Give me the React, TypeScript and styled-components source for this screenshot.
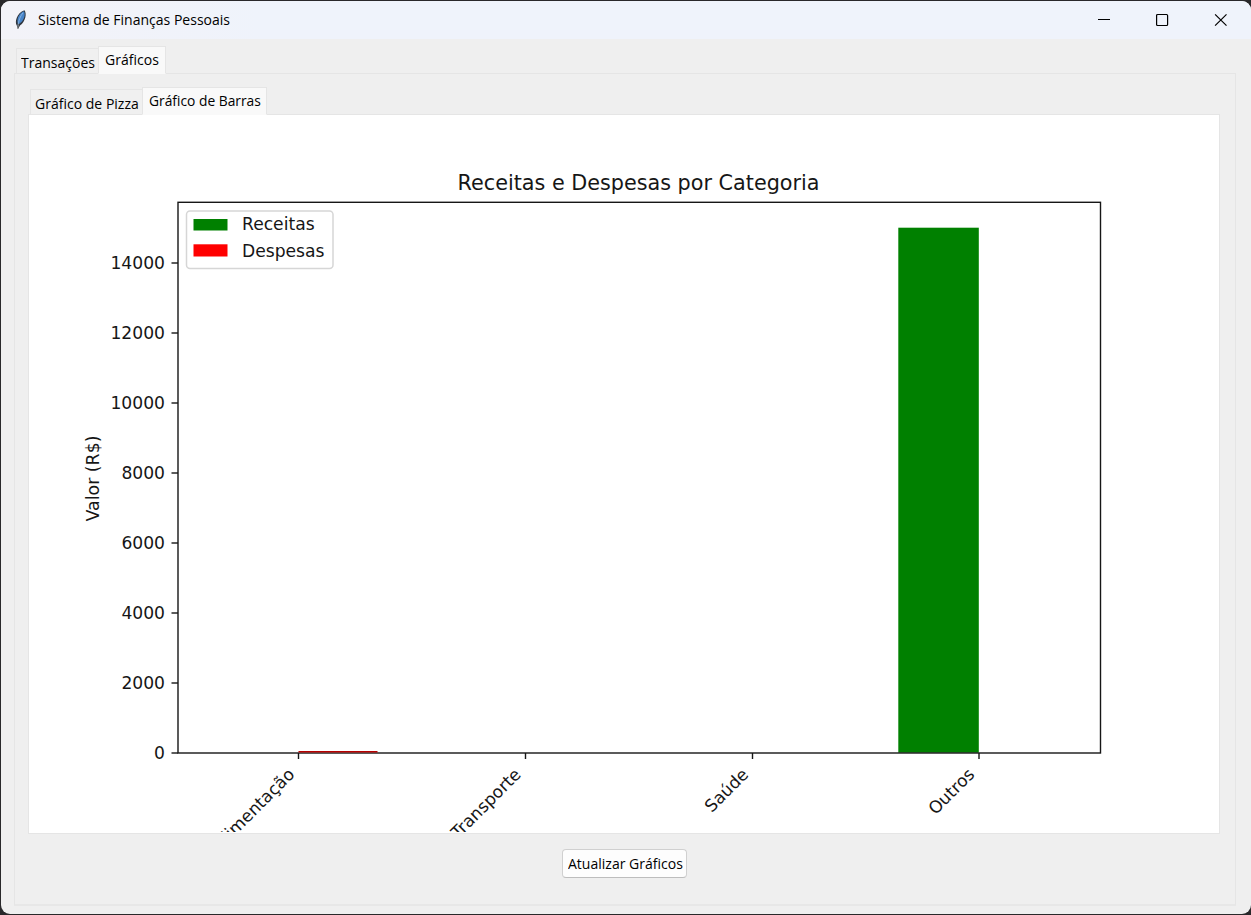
import React from "react";
import styled, { createGlobalStyle } from "styled-components";

const GlobalStyle = createGlobalStyle`
  * { box-sizing: border-box; }
  html, body { margin: 0; background: #29282a; }
  body { width: 1251px; height: 915px; overflow: hidden; }
`;

const Desktop = styled.div`
  width: 1251px;
  height: 915px;
  padding: 1px 0 1px 1px;
  background: #29282a;
  font-family: "Open Sans", "Noto Sans", sans-serif;
  font-size: 15px;
  color: #000;
`;

const Window = styled.main`
  display: flex;
  flex-direction: column;
  height: 913px;
  border-radius: 9px;
  overflow: hidden;
  background: #efefef;
`;

const TitleBar = styled.header`
  display: flex;
  align-items: center;
  height: 38px;
  flex: none;
  padding: 0 1px 0 13px;
  background: linear-gradient(90deg, #f3f3f8 0, #eff3fb 260px);
`;

const Label = styled.span<{ $scale?: number }>`
  display: block;
  width: max-content;
  line-height: 20px;
  white-space: nowrap;
  transform: scaleX(${(p) => p.$scale ?? 0.935});
  transform-origin: 0 50%;
`;

const AppTitle = styled.div`
  flex: 1;
  margin: -2px 0 0 10px;
`;

const Controls = styled.div`
  display: flex;
  height: 100%;
`;

const Control = styled.button`
  display: grid;
  place-items: center;
  width: 58px;
  padding: 0;
  border: 0;
  background: transparent;
`;

const OuterNotebook = styled.section`
  display: flex;
  flex-direction: column;
  width: 1222px;
  margin: 7px 0 0 13px;
  flex: none;
`;

const InnerNotebook = styled.section`
  display: flex;
  flex-direction: column;
  width: 1192px;
  margin: 13px 0 0 13px;
`;

const TabList = styled.nav`
  display: flex;
  align-items: flex-end;
  height: 28px;
  padding-left: 2px;
  margin-bottom: -1px;
`;

const Tab = styled.button<{ $width: number; $active?: boolean }>`
  position: relative;
  z-index: ${(p) => (p.$active ? 1 : 0)};
  width: ${(p) => p.$width}px;
  height: ${(p) => (p.$active ? 28 : 26)}px;
  padding: ${(p) => (p.$active ? "2px 0 0 6px" : "3px 0 0 4px")};
  border: 1px solid #e5e5e5;
  border-bottom-color: ${(p) => (p.$active ? "#f9f9f9" : "#e5e5e5")};
  border-right-width: ${(p) => (p.$active ? 1 : 0)}px;
  background: ${(p) => (p.$active ? "#f9f9f9" : "#f0f0f0")};
  display: flex;
  align-items: flex-start;
  font: inherit;
  color: inherit;
`;

const OuterPane = styled.div`
  height: 833px;
  border: 1px solid #e5e5e5;
  border-bottom: 2px solid #e7e7e7;
  background: #efefef;
`;

const ChartPane = styled.div`
  height: 720px;
  border: 1px solid #e5e5e5;
  background: #fff;
  overflow: hidden;
`;

const Chart = styled.svg`
  display: block;
  font-family: "DejaVu Sans", sans-serif;
  font-size: 17.15px;
  fill: #161616;
`;

const RefreshButton = styled.button`
  display: flex;
  align-items: flex-start;
  width: 125px;
  height: 29px;
  margin: 15px 0 0 547px;
  padding: 3px 0 0 4.5px;
  border: 1px solid #d0d0d0;
  border-bottom-color: #bdbdbd;
  border-radius: 4px;
  background: #fdfdfd;
  font: inherit;
  color: inherit;
`;

const values = [0, 2000, 4000, 6000, 8000, 10000, 12000, 14000];
const categories = [
  { name: "Alimentação", x: 298.5, end: 295.5 },
  { name: "Transporte", x: 525.5, end: 522 },
  { name: "Saúde", x: 752.5, end: 749.5 },
  { name: "Outros", x: 979, end: 975.5 },
];

const Feather = () => (
  <svg width="14" height="22" viewBox="0 0 14 22">
    <path d="M2.800 16.500C.5 13 2.500 4 10.500 1.200C13 4.500 11.500 12.500 6 16.500L4 20Z" fill="#30363e" />
    <path d="M3.800 14.500C2.500 9 5.500 4 10 2.300C12 6 9.500 12.500 5 15Z" fill="#4683c8" />
    <path d="M4 17.500C4.200 12.500 6.500 6.500 9 4" fill="none" stroke="#a4c5e8" strokeWidth=".7" />
    <path d="M4.200 15.500L3.800 19.800" stroke="#777" strokeWidth="1" />
  </svg>
);

const BarChart = () => (
  <Chart width="1190" height="716.5" viewBox="29 115 1190 716.5">
    <text x="457.500" y="190" fontSize="20.83" textLength="362" lengthAdjust="spacingAndGlyphs">
      Receitas e Despesas por Categoria
    </text>
    <rect x="898.300" y="227.700" width="80.500" height="525" fill="#008000" />
    <rect x="178" y="202.300" width="922.500" height="550.700" fill="none" stroke="#161616" strokeWidth="1.400" />
    <rect x="298.500" y="751" width="79" height="1.500" fill="#b80000" />
    {values.map((v) => {
      const y = 753 - (v / 2000) * 70;
      return (
        <g key={v}>
          <path d={`M171.500 ${y}H178`} stroke="#161616" strokeWidth="1.400" />
          <text x="165" y={y + 6} textAnchor="end">{v}</text>
        </g>
      );
    })}
    {categories.map((c) => (
      <g key={c.name}>
        <path d={`M${c.x} 753V759`} stroke="#161616" strokeWidth="1.400" />
        <text transform={`translate(${c.end} 775.500) rotate(-45)`} textAnchor="end" fontSize="17">{c.name}</text>
      </g>
    ))}
    <text transform="translate(98.500 478.500) rotate(-90)" textAnchor="middle" fontSize="17.36">Valor (R$)</text>
    <rect x="186.500" y="211" width="146.500" height="57.500" rx="3.500" fill="#fff" stroke="#d6d6d6" strokeWidth="1.500" />
    <rect x="193.500" y="219" width="34" height="11.500" fill="#008000" />
    <rect x="193.500" y="244.300" width="34" height="12.200" fill="#f00" />
    <text x="242" y="230">Receitas</text>
    <text x="242" y="256.500">Despesas</text>
  </Chart>
);

export default function App() {
  return (
    <>
      <GlobalStyle />
      <Desktop>
        <Window>
          <TitleBar>
            <Feather />
            <AppTitle><Label>Sistema de Finanças Pessoais</Label></AppTitle>
            <Controls>
              <Control aria-label="Minimizar">
                <svg width="14" height="14"><path d="M0 6.500H12" stroke="#000" /></svg>
              </Control>
              <Control aria-label="Maximizar">
                <svg width="14" height="14"><rect x=".6" y="1.500" width="11" height="11" rx="1" fill="none" stroke="#000" strokeWidth="1.200" /></svg>
              </Control>
              <Control aria-label="Fechar">
                <svg width="14" height="14"><path d="M1.100 1.300L12.500 12.700M12.500 1.300L1.100 12.700" stroke="#000" strokeWidth="1.200" /></svg>
              </Control>
            </Controls>
          </TitleBar>
          <OuterNotebook>
            <TabList>
              <Tab $width={82}><Label>Transações</Label></Tab>
              <Tab $width={68} $active><Label>Gráficos</Label></Tab>
            </TabList>
            <OuterPane>
              <InnerNotebook>
                <TabList>
                  <Tab $width={112}><Label>Gráfico de Pizza</Label></Tab>
                  <Tab $width={125} $active><Label $scale={0.92}>Gráfico de Barras</Label></Tab>
                </TabList>
                <ChartPane><BarChart /></ChartPane>
              </InnerNotebook>
              <RefreshButton><Label>Atualizar Gráficos</Label></RefreshButton>
            </OuterPane>
          </OuterNotebook>
        </Window>
      </Desktop>
    </>
  );
}
